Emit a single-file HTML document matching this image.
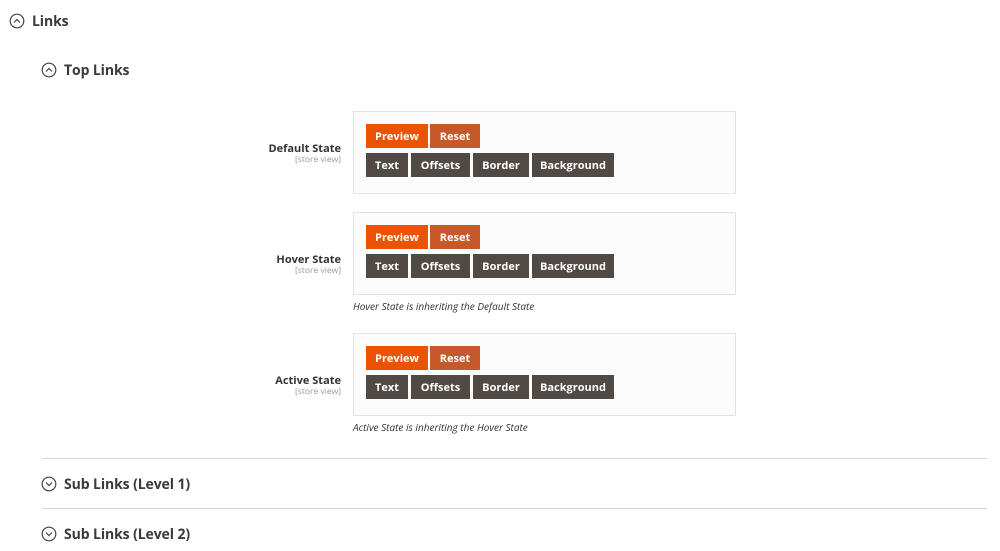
<!DOCTYPE html>
<html><head><meta charset="utf-8"><style>
*{margin:0;padding:0;box-sizing:border-box}
body{width:1000px;height:551px;background:#fff;position:relative;overflow:hidden;font-family:"Open Sans","Liberation Sans",sans-serif;color:#333}
.a{position:absolute}
.h{font-weight:bold;font-size:14px;color:#3a3a3a;white-space:nowrap;letter-spacing:-0.1px}
.ic{position:absolute;width:16px;height:16px}
.box{position:absolute;left:353px;width:383px;height:83px;border:1px solid #e3e3e3;background:#fcfcfc}
.b{position:absolute;height:24px;color:#fff;font-size:11px;line-height:25px;text-align:center;font-weight:bold}
.p{background:#eb5202}.r{background:#c6592a}.d{background:#514943}
.lab{position:absolute;right:659px;text-align:right;font-size:11px;font-weight:bold;color:#333;white-space:nowrap}
.sv{position:absolute;right:659px;font-size:8.5px;color:#999;white-space:nowrap}
.note{position:absolute;left:353px;font-size:10px;font-style:italic;color:#333}
.line{position:absolute;left:42px;width:945px;height:1px;background:#d6d6d6}
</style></head><body>
<svg class="ic" style="left:9px;top:13px" viewBox="0 0 16 16"><circle cx="8" cy="8" r="6.8" fill="none" stroke="#444" stroke-width="1.2"/><path d="M5 9.5 L8 6.5 L11 9.5" fill="none" stroke="#444" stroke-width="1.2"/></svg>
<div class="a h" style="left:32px;top:12px;font-size:14px">Links</div>
<svg class="ic" style="left:41px;top:62px" viewBox="0 0 16 16"><circle cx="8" cy="8" r="6.8" fill="none" stroke="#444" stroke-width="1.2"/><path d="M5 9.5 L8 6.5 L11 9.5" fill="none" stroke="#444" stroke-width="1.2"/></svg>
<div class="a h" style="left:64px;top:61px">Top Links</div>

<div class="lab" style="top:141px">Default State</div><div class="sv" style="top:154px">[store view]</div>
<div class="box" style="top:111px"></div>
<div class="b p" style="left:366px;top:124px;width:62px">Preview</div><div class="b r" style="left:430px;top:124px;width:50px">Reset</div>
<div class="b d" style="left:366px;top:153px;width:42px">Text</div><div class="b d" style="left:411px;top:153px;width:59px">Offsets</div><div class="b d" style="left:473px;top:153px;width:56px">Border</div><div class="b d" style="left:532px;top:153px;width:82px">Background</div>

<div class="lab" style="top:252px">Hover State</div><div class="sv" style="top:265px">[store view]</div>
<div class="box" style="top:212px"></div>
<div class="b p" style="left:366px;top:225px;width:62px">Preview</div><div class="b r" style="left:430px;top:225px;width:50px">Reset</div>
<div class="b d" style="left:366px;top:254px;width:42px">Text</div><div class="b d" style="left:411px;top:254px;width:59px">Offsets</div><div class="b d" style="left:473px;top:254px;width:56px">Border</div><div class="b d" style="left:532px;top:254px;width:82px">Background</div>
<div class="note" style="top:299px">Hover State is inheriting the Default State</div>

<div class="lab" style="top:373px">Active State</div><div class="sv" style="top:386px">[store view]</div>
<div class="box" style="top:333px"></div>
<div class="b p" style="left:366px;top:346px;width:62px">Preview</div><div class="b r" style="left:430px;top:346px;width:50px">Reset</div>
<div class="b d" style="left:366px;top:375px;width:42px">Text</div><div class="b d" style="left:411px;top:375px;width:59px">Offsets</div><div class="b d" style="left:473px;top:375px;width:56px">Border</div><div class="b d" style="left:532px;top:375px;width:82px">Background</div>
<div class="note" style="top:420px">Active State is inheriting the Hover State</div>

<div class="line" style="top:458px"></div>
<svg class="ic" style="left:41px;top:476px" viewBox="0 0 16 16"><circle cx="8" cy="8" r="6.8" fill="none" stroke="#444" stroke-width="1.2"/><path d="M5 6.5 L8 9.5 L11 6.5" fill="none" stroke="#444" stroke-width="1.2"/></svg>
<div class="a h" style="left:64px;top:475px">Sub Links (Level 1)</div>
<div class="line" style="top:508px"></div>
<svg class="ic" style="left:41px;top:526px" viewBox="0 0 16 16"><circle cx="8" cy="8" r="6.8" fill="none" stroke="#444" stroke-width="1.2"/><path d="M5 6.5 L8 9.5 L11 6.5" fill="none" stroke="#444" stroke-width="1.2"/></svg>
<div class="a h" style="left:64px;top:525px">Sub Links (Level 2)</div>
</body></html>
